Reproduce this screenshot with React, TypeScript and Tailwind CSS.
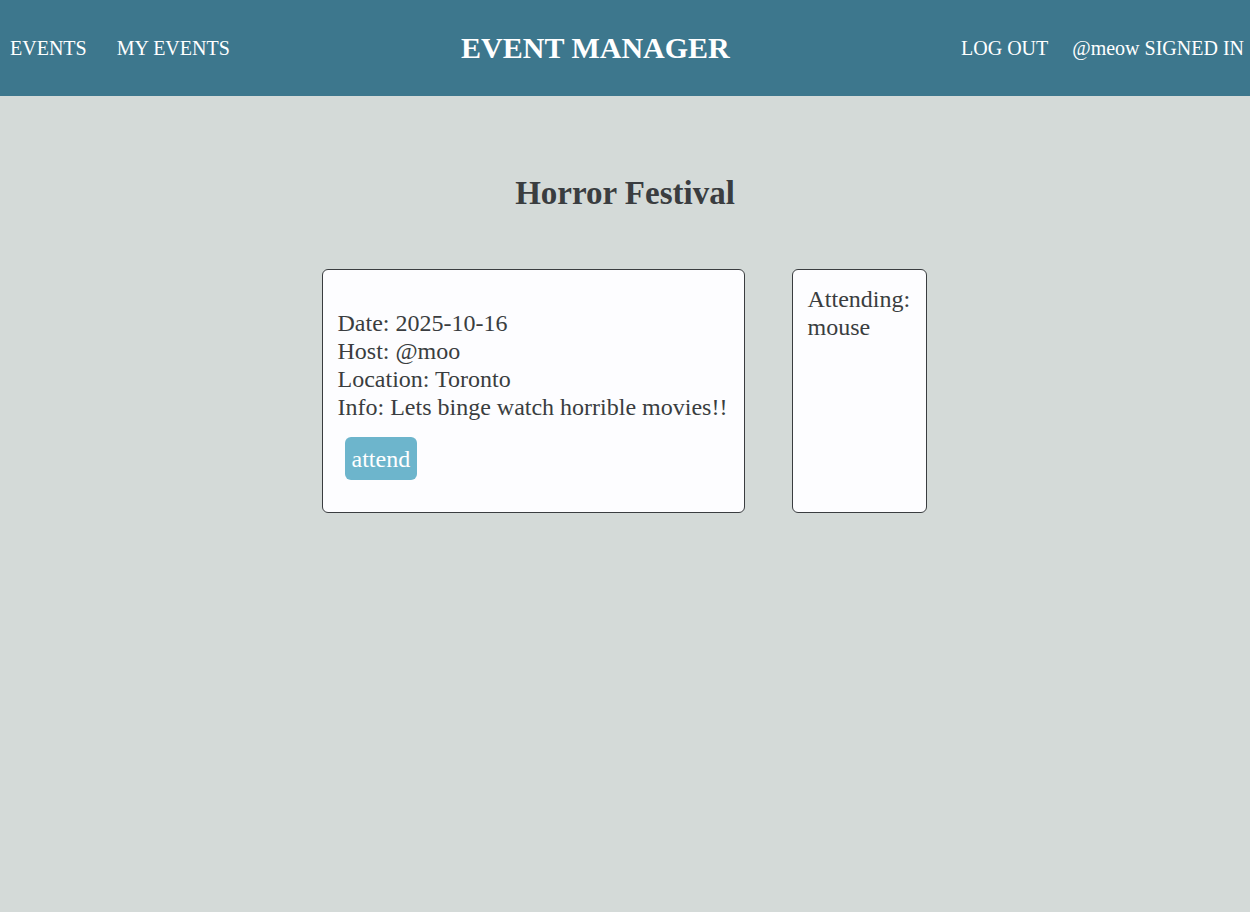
const serif = { fontFamily: '"Liberation Serif", "Times New Roman", serif' };

const App = () => {
  return (
    <div className="min-h-[912px] w-full bg-[#d4dad8]" style={serif}>
      <header className="flex h-[96px] items-center justify-between bg-[#3d778d] text-white">
        <nav className="flex items-center gap-[30px] pl-[10px] text-[20px]">
          <span>EVENTS</span>
          <span>MY EVENTS</span>
        </nav>
        <h1 className="text-[30px] font-bold leading-none">EVENT MANAGER</h1>
        <nav className="flex items-center gap-[24px] pr-[6px] text-[20px]">
          <span>LOG OUT</span>
          <span>@meow SIGNED IN</span>
        </nav>
      </header>

      <main className="flex flex-col items-center text-[#3a3d40]">
        <h2 className="mt-[78px] text-[33px] font-bold leading-[38px]">
          Horror Festival
        </h2>

        <div className="mr-[2px] mt-[57px] flex gap-[47px]">
          <div className="h-[244px] w-[423px] rounded-[6px] border border-[#3a3d40] bg-[#fdfdff] px-[15px] pt-[39px] text-[24px] leading-[28px]">
            <p>Date: 2025-10-16</p>
            <p>Host: @moo</p>
            <p>Location: Toronto</p>
            <p>Info: Lets binge watch horrible movies!!</p>
            <button className="ml-[7px] mt-[16px] h-[43px] rounded-[6px] bg-[#6db5cc] px-[7px] text-[24px] text-white">
              attend
            </button>
          </div>

          <div className="h-[244px] w-[135px] rounded-[6px] border border-[#3a3d40] bg-[#fdfdff] px-[15px] pt-[15px] text-[24px] leading-[28px]">
            <p>Attending:</p>
            <p>mouse</p>
          </div>
        </div>
      </main>
    </div>
  );
};

export default App;
